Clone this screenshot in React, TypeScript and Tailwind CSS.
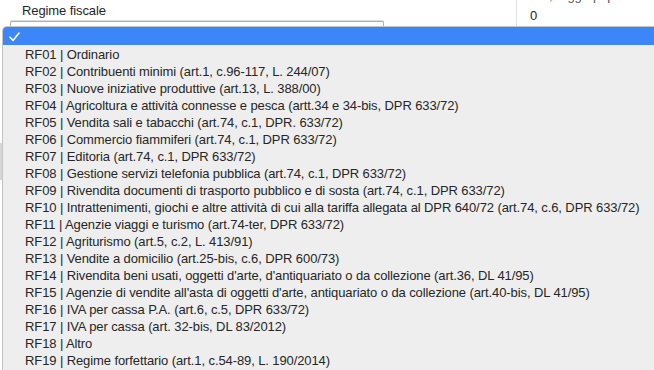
import React from "react";

const items = [
  "RF01 | Ordinario",
  "RF02 | Contribuenti minimi (art.1, c.96-117, L. 244/07)",
  "RF03 | Nuove iniziative produttive (art.13, L. 388/00)",
  "RF04 | Agricoltura e attività connesse e pesca (artt.34 e 34-bis, DPR 633/72)",
  "RF05 | Vendita sali e tabacchi (art.74, c.1, DPR. 633/72)",
  "RF06 | Commercio fiammiferi (art.74, c.1, DPR 633/72)",
  "RF07 | Editoria (art.74, c.1, DPR 633/72)",
  "RF08 | Gestione servizi telefonia pubblica (art.74, c.1, DPR 633/72)",
  "RF09 | Rivendita documenti di trasporto pubblico e di sosta (art.74, c.1, DPR 633/72)",
  "RF10 | Intrattenimenti, giochi e altre attività di cui alla tariffa allegata al DPR 640/72 (art.74, c.6, DPR 633/72)",
  "RF11 | Agenzie viaggi e turismo (art.74-ter, DPR 633/72)",
  "RF12 | Agriturismo (art.5, c.2, L. 413/91)",
  "RF13 | Vendite a domicilio (art.25-bis, c.6, DPR 600/73)",
  "RF14 | Rivendita beni usati, oggetti d'arte, d'antiquariato o da collezione (art.36, DL 41/95)",
  "RF15 | Agenzie di vendite all'asta di oggetti d'arte, antiquariato o da collezione (art.40-bis, DL 41/95)",
  "RF16 | IVA per cassa P.A. (art.6, c.5, DPR 633/72)",
  "RF17 | IVA per cassa (art. 32-bis, DL 83/2012)",
  "RF18 | Altro",
  "RF19 | Regime forfettario (art.1, c.54-89, L. 190/2014)",
];

export default function App() {
  return (
    <div
      className="relative w-[654px] h-[370px] overflow-hidden bg-white text-[13px] text-[#262626] tracking-[-0.1px]"
      style={{ fontFamily: '"Liberation Sans", Arial, sans-serif' }}
    >
      {/* page underneath */}
      <div className="flex h-[26px]">
        <div className="w-[516px] flex flex-col">
          <div className="pl-[22px] pt-[3px] leading-[15px] h-[21px]">Regime fiscale</div>
          <div className="ml-[10px] w-[374px] h-[5px] border-t border-x border-[#b0b0b0] rounded-t-[2px] bg-white shadow-[0_-1px_0_#dcdcdc]"></div>
        </div>
        <div className="flex-1 border-l border-[#e2e2e2] pl-[13px] relative">
          <div className="absolute top-[-12px] left-[13px] text-[#555] leading-[15px] whitespace-nowrap">Rit., raggrup. p</div>
          <div className="pt-[8px] leading-[15px]">0</div>
        </div>
      </div>
      {/* gray element under the menu on the left */}
      <div className="absolute left-0 top-[143px] w-[3px] h-[37px] bg-[#d6d6d6]"></div>

      {/* dropdown menu */}
      <div className="absolute left-[2px] top-[26px] right-[-4px] bottom-[-6px] bg-[#eeeeee] border-l border-t border-[#c4c4c4] rounded-tl-[5px]">
        <div className="h-[18px] mb-[1px] bg-[#3b86f9] flex items-center pl-[6px] rounded-tl-[4px]">
          <svg width="11" height="10" viewBox="0 0 11 10" className="mt-[1px]">
            <path d="M1 5.2 L4 8.4 L10 1" fill="none" stroke="#fff" strokeWidth="1.6" strokeLinecap="round" strokeLinejoin="round" />
          </svg>
        </div>
        {items.map((t) => (
          <div key={t} className="h-[17px] leading-[17px] pl-[22px] whitespace-nowrap">
            {t}
          </div>
        ))}
      </div>
    </div>
  );
}
